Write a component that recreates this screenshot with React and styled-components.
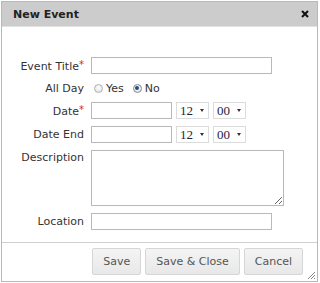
import { styled, createGlobalStyle } from "styled-components";

const Global = createGlobalStyle`
  html, body {
    margin: 0;
    padding: 0;
    background: #fff;
  }
  body {
    font-family: "DejaVu Sans", Verdana, sans-serif;
    font-size: 11px;
    color: #333;
  }
`;

const Dialog = styled.div`
  position: relative;
  margin: 1px 0 0 1px;
  width: 317px;
  height: 281px;
  box-sizing: border-box;
  border: 1px solid #b8b8b8;
  display: flex;
  flex-direction: column;
  background: #fff;
`;

const Header = styled.div`
  height: 24px;
  background: #cccccc;
  border-bottom: 1px solid #e2e2e2;
  display: flex;
  align-items: center;
  justify-content: space-between;
  padding: 0 8px 0 11px;
  font-weight: bold;
  font-size: 11px;
  color: #222;
`;

const CloseBtn = styled.span`
  display: flex;
  width: 8px;
  height: 8px;
  cursor: pointer;
`;

const Form = styled.div`
  flex: 1;
  display: grid;
  grid-template-columns: 82px 1fr;
  column-gap: 7px;
  row-gap: 7px;
  align-content: start;
  padding-top: 30px;
`;

const Label = styled.label`
  text-align: right;
  align-self: ${(p) => (p.$top ? "start" : "center")};
  padding-top: ${(p) => (p.$top ? "1px" : "0")};
  white-space: nowrap;
  color: #333;
`;

const Req = styled.span`
  color: #e02020;
  vertical-align: 2px;
  font-size: 10px;
`;

const TextInput = styled.input`
  box-sizing: border-box;
  width: ${(p) => p.$w}px;
  height: 17px;
  border: 1px solid #b9b9b9;
  padding: 0 3px;
  margin: 0;
  font: inherit;
  outline: none;
`;

const TextArea = styled.textarea`
  box-sizing: border-box;
  width: 193px;
  height: 56px;
  border: 1px solid #b9b9b9;
  margin: 0;
  padding: 2px 3px;
  font: inherit;
  outline: none;
`;

const Inline = styled.div`
  display: flex;
  align-items: center;
  gap: ${(p) => p.$gap ?? 4}px;
  height: ${(p) => p.$h || 17}px;
`;

const RadioLabel = styled.span`
  display: flex;
  align-items: center;
  gap: 3px;
  margin-right: ${(p) => p.$mr || 0}px;
  padding-left: 3px;
`;

const RadioDot = styled.span`
  width: 9px;
  height: 9px;
  box-sizing: border-box;
  border-radius: 50%;
  border: 1px solid ${(p) => (p.$on ? "#8a8a8a" : "#b0b0b0")};
  background: radial-gradient(circle at 50% 40%, #fff, #dcdcdc);
  display: flex;
  align-items: center;
  justify-content: center;

  &::after {
    content: "";
    display: ${(p) => (p.$on ? "block" : "none")};
    width: 4px;
    height: 4px;
    border-radius: 50%;
    background: #1f4f87;
  }
`;

const SelectBox = styled.span`
  box-sizing: border-box;
  width: 33px;
  height: 17px;
  border: 1px solid #dcdcdc;
  display: flex;
  align-items: center;
  justify-content: space-between;
  padding: 0 4px 0 3px;
  font-family: "Liberation Serif", "Times New Roman", serif;
  font-size: 13px;
  color: #1e2440;
  background: #fff;
`;

const Caret = styled.span`
  width: 0;
  height: 0;
  border-left: 2.5px solid transparent;
  border-right: 2.5px solid transparent;
  border-top: 3px solid #333;
`;

const Footer = styled.div`
  border-top: 1px solid #cfcfcf;
  padding: 5px 14px 6px 0;
  display: flex;
  justify-content: flex-end;
  gap: 4px;
`;

const Button = styled.button`
  height: 27px;
  padding: 0 10px;
  border: 1px solid #d6d6d6;
  border-radius: 2px;
  background: linear-gradient(#f4f4f4, #e8e8e8);
  color: #555;
  font-family: "DejaVu Sans", Verdana, sans-serif;
  font-size: 11px;
  cursor: pointer;
`;

const Grip = styled.span`
  position: absolute;
  right: 1px;
  bottom: 1px;
  width: 9px;
  height: 9px;
  display: flex;
`;

const TimeSelect = ({ value }) => (
  <SelectBox>
    <span>{value}</span>
    <Caret />
  </SelectBox>
);

export default function App() {
  return (
    <>
      <Global />
      <Dialog>
        <Header>
          <span>New Event</span>
          <CloseBtn>
            <svg width="8" height="8" viewBox="0 0 8 8">
              <path d="M1 1L7 7M7 1L1 7" stroke="#111" strokeWidth="2" />
            </svg>
          </CloseBtn>
        </Header>
        <Form>
          <Label>
            Event Title<Req>*</Req>
          </Label>
          <TextInput $w={181} />

          <Label>All Day</Label>
          <Inline $h={14} $gap={0}>
            <RadioLabel $mr={6}>
              <RadioDot />
              Yes
            </RadioLabel>
            <RadioLabel>
              <RadioDot $on />
              No
            </RadioLabel>
          </Inline>

          <Label>
            Date<Req>*</Req>
          </Label>
          <Inline>
            <TextInput $w={81} />
            <TimeSelect value="12" />
            <TimeSelect value="00" />
          </Inline>

          <Label>Date End</Label>
          <Inline>
            <TextInput $w={81} />
            <TimeSelect value="12" />
            <TimeSelect value="00" />
          </Inline>

          <Label $top>Description</Label>
          <TextArea />

          <Label>Location</Label>
          <TextInput $w={181} />
        </Form>
        <Footer>
          <Button>Save</Button>
          <Button>Save &amp; Close</Button>
          <Button>Cancel</Button>
        </Footer>
        <Grip>
          <svg width="9" height="9" viewBox="0 0 9 9">
            <path d="M8 1L1 8M8 4L4 8M8 7L7 8" stroke="#888" strokeWidth="1" />
          </svg>
        </Grip>
      </Dialog>
    </>
  );
}
